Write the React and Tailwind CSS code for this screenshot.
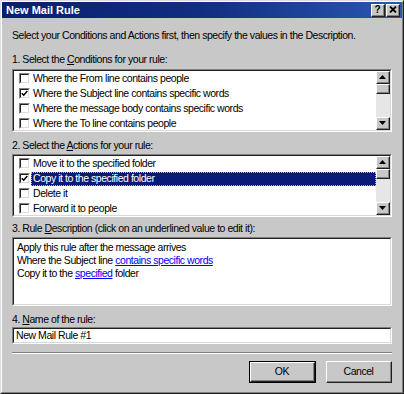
import React from 'react';

const Check = ({ checked }) => (
  <span className="w-[11px] h-[11px] shrink-0 bg-white border-t border-l border-[#808080] border-b border-r border-b-white border-r-white flex">
    <span className="flex-1 border-t border-l border-[#202020] border-b border-r border-b-[#dcdcdc] border-r-[#dcdcdc] flex items-center justify-center">
      {checked && (
        <svg width="7" height="7" viewBox="0 0 7 7">
          <path d="M0.8 3.2 L2.7 5.2 L6.3 1" stroke="#000" strokeWidth="1.5" fill="none" />
        </svg>
      )}
    </span>
  </span>
);

const Raised = ({ className = '', children }) => (
  <div className={`bg-[#c8c8c8] border-t border-l border-white border-b border-r border-b-[#202020] border-r-[#202020] ${className}`}>
    <div className="w-full h-full border-b border-r border-[#808080] flex items-center justify-center">{children}</div>
  </div>
);

const Sunken = ({ className = '', children }) => (
  <div className={`border-t border-l border-[#808080] border-b border-r border-b-white border-r-white ${className}`}>
    <div className="w-full h-full border-t border-l border-[#202020] border-b border-r border-b-[#d8d8d8] border-r-[#d8d8d8] bg-white overflow-hidden">
      {children}
    </div>
  </div>
);

const ScrollBar = () => (
  <div className="w-[14px] h-full flex flex-col bg-[#e6e6e6]">
    <Raised className="h-[13px] w-[14px]">
      <svg width="7" height="4" viewBox="0 0 7 4"><path d="M3.5 0 L7 4 L0 4 Z" fill="#000" /></svg>
    </Raised>
    <Raised className="h-[10px] w-[14px]" />
    <div className="flex-1" />
    <Raised className="h-[13px] w-[14px]">
      <svg width="7" height="4" viewBox="0 0 7 4"><path d="M0 0 L7 0 L3.5 4 Z" fill="#000" /></svg>
    </Raised>
  </div>
);

const RuleList = ({ items }) => (
  <Sunken className="h-[63px]">
    <div className="flex h-full">
      <div className="flex-1 flex flex-col">
        {items.map((it) => (
          <div key={it.label} className="h-[15px] shrink-0 flex items-center pl-[5px]">
            <Check checked={it.checked} />
            <span
              className={`ml-[1px] h-[14px] flex-1 flex items-center pl-[2px] ${
                it.selected ? 'bg-[#0a1a78] text-white outline-1 outline-dotted outline-[#c8c070] -outline-offset-1' : ''
              }`}
            >
              {it.label}
            </span>
          </div>
        ))}
      </div>
      <ScrollBar />
    </div>
  </Sunken>
);

const Label = ({ pre, u, post, className = '' }) => (
  <div className={`h-[13px] leading-[13px] ${className}`}>
    {pre}
    <span className="underline">{u}</span>
    {post}
  </div>
);

export default function App() {
  const conditions = [
    { label: 'Where the From line contains people' },
    { label: 'Where the Subject line contains specific words', checked: true },
    { label: 'Where the message body contains specific words' },
    { label: 'Where the To line contains people' },
  ];
  const actions = [
    { label: 'Move it to the specified folder' },
    { label: 'Copy it to the specified folder', checked: true, selected: true },
    { label: 'Delete it' },
    { label: 'Forward it to people' },
  ];

  return (
    <div
      className="w-[404px] h-[394px] border-t border-l border-[#dcdcdc] border-b border-r border-b-[#202020] border-r-[#202020] text-[10.5px] tracking-[-0.45px] text-black"
      style={{ fontFamily: '"Liberation Sans", Arial, sans-serif' }}
    >
      <div className="w-full h-full bg-[#c8c8c8] border-t border-l border-white border-b border-r border-b-[#808080] border-r-[#808080] flex flex-col">
        {/* Title bar */}
        <div className="h-[16px] flex items-center bg-gradient-to-r from-[#0a1e6e] via-[#122e80] to-[#2a58b0] pl-[4px] pr-[2px]">
          <span className="flex-1 text-white font-bold text-[11px] tracking-normal">New Mail Rule</span>
          <div className="flex gap-[1px]">
            <Raised className="w-[14px] h-[13px]">
              <span className="font-bold text-[10px] leading-none tracking-normal">?</span>
            </Raised>
            <Raised className="w-[14px] h-[13px]">
              <svg width="8" height="7" viewBox="0 0 8 7">
                <path d="M1 0.5 L7 6.5 M7 0.5 L1 6.5" stroke="#000" strokeWidth="1.8" />
              </svg>
            </Raised>
          </div>
        </div>

        <div className="flex flex-col px-[10px]">
          <div className="mt-[11px] h-[13px] leading-[13px]">
            Select your Conditions and Actions first, then specify the values in the Description.
          </div>

          <Label className="mt-[11px]" pre="1. Select the " u="C" post="onditions for your rule:" />
          <div className="mt-[3px]">
            <RuleList items={conditions} />
          </div>

          <Label className="mt-[7px]" pre="2. Select the " u="A" post="ctions for your rule:" />
          <div className="mt-[2px]">
            <RuleList items={actions} />
          </div>

          <Label className="mt-[5px]" pre="3. Rule " u="D" post="escription (click on an underlined value to edit it):" />
          <div className="mt-[2px]">
            <Sunken className="h-[69px]">
              <div className="px-[3px] pt-[2px] leading-[13px]">
                <div>Apply this rule after the message arrives</div>
                <div>
                  Where the Subject line <span className="text-[#0000ff] underline">contains specific words</span>
                </div>
                <div>
                  Copy it to the <span className="text-[#0000ff] underline">specified</span> folder
                </div>
              </div>
            </Sunken>
          </div>

          <Label className="mt-[7px]" pre="4. " u="N" post="ame of the rule:" />
          <div className="mt-[1px]">
            <Sunken className="h-[17px]">
              <div className="px-[2px] h-full flex items-center">New Mail Rule #1</div>
            </Sunken>
          </div>

          <div className="mt-[8px] border-t border-[#808080] border-b border-b-white" />

          <div className="mt-[7px] flex justify-end gap-[10px]">
            <div className="border border-black">
              <Raised className="w-[65px] h-[20px]">OK</Raised>
            </div>
            <Raised className="w-[66px] h-[22px]">Cancel</Raised>
          </div>
        </div>
      </div>
    </div>
  );
}
